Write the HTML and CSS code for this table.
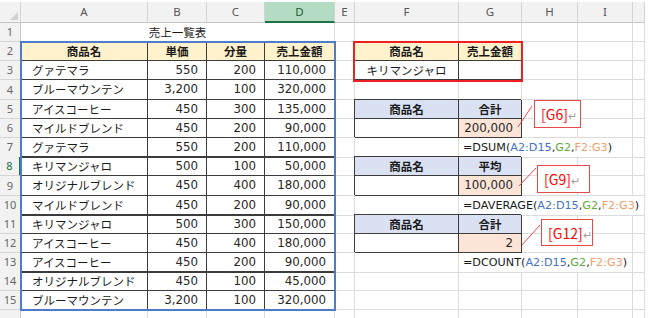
FILE: index.html
```html
<!DOCTYPE html>
<html lang="ja">
<head>
<meta charset="utf-8">
<title>売上一覧表</title>
<link rel="stylesheet" href="styles.css">
</head>
<body>
<div class="sheet">
  <div class="row hdr">
    <div class="c corner"></div>
    <div class="c col">A</div>
    <div class="c col">B</div>
    <div class="c col">C</div>
    <div class="c col active">D</div>
    <div class="c col">E</div>
    <div class="c col">F</div>
    <div class="c col">G</div>
    <div class="c col">H</div>
    <div class="c col">I</div>
    <div class="c col"></div>
  </div>

  <div class="row">
    <div class="c rn">1</div>
    <div class="c title s4">売上一覧表</div>
    <div class="c"></div><div class="c"></div><div class="c"></div><div class="c"></div><div class="c"></div><div class="c"></div>
  </div>

  <div class="row">
    <div class="c rn">2</div>
    <div class="c t th y">商品名</div>
    <div class="c t th y">単価</div>
    <div class="c t th y">分量</div>
    <div class="c t th y">売上金額</div>
    <div class="c"></div>
    <div class="c t th y">商品名</div>
    <div class="c t th y">売上金額</div>
    <div class="c"></div><div class="c"></div><div class="c"></div>
  </div>

  <div class="row">
    <div class="c rn">3</div>
    <div class="c t jp">グァテマラ</div>
    <div class="c t num">550</div>
    <div class="c t num">200</div>
    <div class="c t num">110,000</div>
    <div class="c"></div>
    <div class="c t ctr">キリマンジャロ</div>
    <div class="c t"></div>
    <div class="c"></div><div class="c"></div><div class="c"></div>
  </div>

  <div class="row tall">
    <div class="c rn">4</div>
    <div class="c t jp">ブルーマウンテン</div>
    <div class="c t num">3,200</div>
    <div class="c t num">100</div>
    <div class="c t num">320,000</div>
    <div class="c"></div><div class="c"></div><div class="c"></div><div class="c"></div><div class="c"></div><div class="c"></div>
  </div>

  <div class="row">
    <div class="c rn">5</div>
    <div class="c t jp">アイスコーヒー</div>
    <div class="c t num">450</div>
    <div class="c t num">300</div>
    <div class="c t num">135,000</div>
    <div class="c"></div>
    <div class="c t th b">商品名</div>
    <div class="c t th b">合計</div>
    <div class="c"></div><div class="c"></div><div class="c"></div>
  </div>

  <div class="row">
    <div class="c rn">6</div>
    <div class="c t jp">マイルドブレンド</div>
    <div class="c t num">450</div>
    <div class="c t num">200</div>
    <div class="c t num">90,000</div>
    <div class="c"></div>
    <div class="c t"></div>
    <div class="c t num p">200,000</div>
    <div class="c"></div><div class="c"></div><div class="c"></div>
  </div>

  <div class="row">
    <div class="c rn">7</div>
    <div class="c t jp">グァテマラ</div>
    <div class="c t num">550</div>
    <div class="c t num">200</div>
    <div class="c t num">110,000</div>
    <div class="c"></div>
    <div class="c"></div>
    <div class="c f s3">=DSUM(<span class="ra">A2:D15</span>,<span class="rg">G2</span>,<span class="ro">F2:G3</span>)</div>
    <div class="c"></div>
  </div>

  <div class="row">
    <div class="c rn sel">8</div>
    <div class="c t jp">キリマンジャロ</div>
    <div class="c t num">500</div>
    <div class="c t num">100</div>
    <div class="c t num">50,000</div>
    <div class="c"></div>
    <div class="c t th b">商品名</div>
    <div class="c t th b">平均</div>
    <div class="c"></div><div class="c"></div><div class="c"></div>
  </div>

  <div class="row tall">
    <div class="c rn">9</div>
    <div class="c t jp">オリジナルブレンド</div>
    <div class="c t num">450</div>
    <div class="c t num">400</div>
    <div class="c t num">180,000</div>
    <div class="c"></div>
    <div class="c t"></div>
    <div class="c t num p">100,000</div>
    <div class="c"></div><div class="c"></div><div class="c"></div>
  </div>

  <div class="row">
    <div class="c rn">10</div>
    <div class="c t jp">マイルドブレンド</div>
    <div class="c t num">450</div>
    <div class="c t num">200</div>
    <div class="c t num">90,000</div>
    <div class="c"></div>
    <div class="c"></div>
    <div class="c f s4">=DAVERAGE(<span class="ra">A2:D15</span>,<span class="rg">G2</span>,<span class="ro">F2:G3</span>)</div>
  </div>

  <div class="row">
    <div class="c rn">11</div>
    <div class="c t jp">キリマンジャロ</div>
    <div class="c t num">500</div>
    <div class="c t num">300</div>
    <div class="c t num">150,000</div>
    <div class="c"></div>
    <div class="c t th b">商品名</div>
    <div class="c t th b">合計</div>
    <div class="c"></div><div class="c"></div><div class="c"></div>
  </div>

  <div class="row">
    <div class="c rn">12</div>
    <div class="c t jp">アイスコーヒー</div>
    <div class="c t num">450</div>
    <div class="c t num">400</div>
    <div class="c t num">180,000</div>
    <div class="c"></div>
    <div class="c t"></div>
    <div class="c t num p">2</div>
    <div class="c"></div><div class="c"></div><div class="c"></div>
  </div>

  <div class="row">
    <div class="c rn">13</div>
    <div class="c t jp">アイスコーヒー</div>
    <div class="c t num">450</div>
    <div class="c t num">200</div>
    <div class="c t num">90,000</div>
    <div class="c"></div>
    <div class="c"></div>
    <div class="c f s3">=DCOUNT(<span class="ra">A2:D15</span>,<span class="rg">G2</span>,<span class="ro">F2:G3</span>)</div>
    <div class="c"></div>
  </div>

  <div class="row">
    <div class="c rn">14</div>
    <div class="c t jp">オリジナルブレンド</div>
    <div class="c t num">450</div>
    <div class="c t num">100</div>
    <div class="c t num">45,000</div>
    <div class="c"></div><div class="c"></div><div class="c"></div><div class="c"></div><div class="c"></div><div class="c"></div>
  </div>

  <div class="row">
    <div class="c rn">15</div>
    <div class="c t jp">ブルーマウンテン</div>
    <div class="c t num">3,200</div>
    <div class="c t num">100</div>
    <div class="c t num">320,000</div>
    <div class="c"></div><div class="c"></div><div class="c"></div><div class="c"></div><div class="c"></div><div class="c"></div>
  </div>

  <div class="row">
    <div class="c rn"></div>
    <div class="c"></div><div class="c"></div><div class="c"></div><div class="c"></div><div class="c"></div><div class="c"></div><div class="c"></div><div class="c"></div><div class="c"></div><div class="c"></div>
  </div>

  <div class="range"></div>
  <div class="crit"></div>

  <svg class="leaders" width="645" height="316" viewBox="0 0 645 316">
    <line x1="532" y1="104" x2="518" y2="125"/>
    <line x1="536" y1="166" x2="519" y2="184"/>
    <line x1="540" y1="223" x2="522" y2="243"/>
  </svg>

  <div class="note n1">[G6]<span class="ret">↵</span></div>
  <div class="note n2">[G9]<span class="ret">↵</span></div>
  <div class="note n3">[G12]<span class="ret">↵</span></div>
</div>
</body>
</html>
```

FILE: styles.css
```css
* { box-sizing: border-box; }

html, body { overflow: hidden; }

body {
  margin: 0;
  background: #fff;
  font-family: "Noto Sans CJK JP", sans-serif;
  font-size: 11.5px;
  color: #1a1a1a;
}

.sheet {
  position: relative;
  width: 645px;
  margin-top: 2px;
}

.row {
  display: grid;
  grid-template-columns: 21px 127px 59px 58px 70px 20px 104px 63px 56px 55px 12px;
  height: 19px;
}

.row.hdr { height: 21px; }
.row.tall { height: 20px; }

.c {
  border-right: 1px solid #dcdcdc;
  border-bottom: 1px solid #dcdcdc;
  line-height: 18px;
  white-space: nowrap;
  overflow: hidden;
}

.tall .c { line-height: 19px; }

.s3 { grid-column: span 3; overflow: visible; }
.s4 { grid-column: span 4; overflow: visible; }

/* headers */
.col, .corner {
  background: #f2f2f2;
  border-right-color: #d4d4d4;
  border-bottom-color: #c6c6c6;
  text-align: center;
  line-height: 20px;
  font-family: "Noto Sans", sans-serif;
  font-size: 11.5px;
  color: #555;
}

.corner { position: relative; }
.corner::after {
  content: "";
  position: absolute;
  right: 2px;
  bottom: 2px;
  border-style: solid;
  border-width: 0 0 8px 8px;
  border-color: transparent transparent #d0d0d0 transparent;
}

.col.active {
  background: #b4dcc2;
  border-bottom: 2px solid #217346;
  color: #1e5c3a;
}

.rn {
  background: #f2f2f2;
  border-right-color: #c6c6c6;
  border-bottom-color: #d4d4d4;
  text-align: center;
  font-family: "Noto Sans", sans-serif;
  font-size: 11px;
  color: #666;
}

.rn.sel {
  color: #217346;
  border-right: 2px solid #217346;
}

/* cell content */
.title { text-align: center; }

.t {
  border-right-color: #3c3c3c;
  border-bottom-color: #3c3c3c;
  box-shadow: -1px -1px 0 #3c3c3c;
}

.th { text-align: center; font-weight: 700; }
.y { background: #fff2cc; }
.b { background: #d9e1f2; }
.p { background: #fce4d6; }

.jp { padding-left: 11px; }
.ctr { text-align: center; }

.num {
  text-align: right;
  padding-right: 8px;
  font-family: "DejaVu Sans", sans-serif;
  font-size: 11.8px;
  color: #262626;
}

.f {
  padding-left: 4px;
  font-family: "DejaVu Sans", sans-serif;
  font-size: 11.2px;
  line-height: 19px;
}

.ra { color: #4472c4; }
.rg { color: #5fa83a; }
.ro { color: #f0a070; }

/* overlays */
.range {
  position: absolute;
  left: 20px;
  top: 39px;
  width: 316px;
  height: 270px;
  border: 2px solid #4f7bcb;
}

.crit {
  position: absolute;
  left: 353px;
  top: 39px;
  width: 170px;
  height: 41px;
  border: 2px solid #f02020;
}

.leaders {
  position: absolute;
  left: 0;
  top: 0;
  pointer-events: none;
}

.leaders line {
  stroke: #f04848;
  stroke-width: 1;
}

.note {
  position: absolute;
  background: #fff;
  border: 1px solid #e84a4a;
  color: #ff0000;
  font-size: 14px;
  line-height: 26px;
  padding-left: 6px;
  white-space: nowrap;
}

.ret {
  color: #a0a0a0;
  font-size: 11px;
}

.n1 { left: 534px; top: 98px; width: 47px; height: 28px; }
.n2 { left: 537px; top: 163px; width: 53px; height: 28px; }
.n3 { left: 541px; top: 217px; width: 52px; height: 27px; }
```
